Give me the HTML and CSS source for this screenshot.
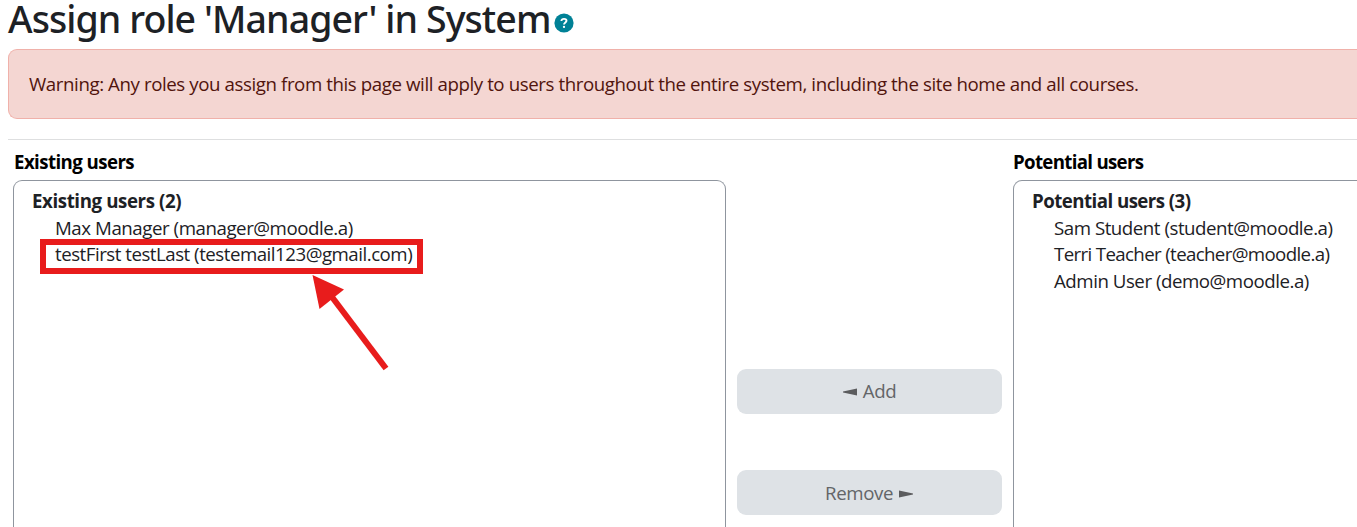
FILE: index.html
```html
<!DOCTYPE html>
<html lang="en">
<head>
<meta charset="utf-8">
<title>Assign role 'Manager' in System</title>
<link rel="stylesheet" href="styles.css">
</head>
<body>
<header class="page-head">
  <h1 class="title">Assign role 'Manager' in System</h1>
  <svg class="help" viewBox="0 0 20 20" role="img" aria-label="Help"><circle cx="10" cy="10" r="9.6" fill="#008196"/><path d="M7.4 8C7.4 6.500 8.400 5.900 10 5.900C11.600 5.900 12.500 6.600 12.500 7.800C12.500 9.500 10 9.400 10 11.600" fill="none" stroke="#fff" stroke-width="1.900"/><circle cx="10" cy="13.900" r="1.150" fill="#fff"/></svg>
</header>
<div class="alert">Warning: Any roles you assign from this page will apply to users throughout the entire system, including the site home and all courses.</div>
<hr class="rule">
<main class="assign">
  <section class="col">
    <h2 class="label">Existing users</h2>
    <div class="list">
      <div class="group">Existing users (2)</div>
      <div class="option">Max Manager (manager@moodle.a)</div>
      <div class="option marked">testFirst testLast (testemail123@gmail.com)</div>
    </div>
  </section>
  <div class="actions">
    <button class="btn"><svg class="tri" viewBox="0 0 15 8"><path d="M0 3.500L14 .5V7.500L0 4.500Z"/></svg>Add</button>
    <button class="btn remove">Remove<svg class="tri" viewBox="0 0 15 8"><path d="M15 3.500L1 .5V7.500L15 4.500Z"/></svg></button>
  </div>
  <section class="col potential">
    <h2 class="label">Potential users</h2>
    <div class="list">
      <div class="group">Potential users (3)</div>
      <div class="option">Sam Student (student@moodle.a)</div>
      <div class="option teacher">Terri Teacher (teacher@moodle.a)</div>
      <div class="option">Admin User (demo@moodle.a)</div>
    </div>
  </section>
</main>
<svg class="arrow" viewBox="0 0 80 100"><path d="M76 93.500L22 22" stroke="#e81c1c" stroke-width="6"/><path d="M2.500 0L34 14.500L9.500 34Z" fill="#e81c1c"/></svg>
</body>
</html>
```
FILE: styles.css
```css
*, *::before { box-sizing: border-box; }
body { margin: 0; width: 1357px; height: 527px; overflow: hidden; background: #fff; color: #1d2125; font: 18.7px/26.5px "Open Sans", sans-serif; letter-spacing: -0.415px; white-space: nowrap; }
.page-head { display: flex; height: 49px; padding-left: 8px; }
.title { margin: 0; font-family: "Noto Sans", sans-serif; font-size: 37.5px; line-height: 38px; font-weight: 500; letter-spacing: -0.92px; }
.help { width: 20px; height: 20px; margin: 13px 0 0 3.500px; }
.alert { height: 70px; margin-left: 8px; padding: 21px 20px; border: 1px solid #f0b1aa; border-right: 0; border-radius: 9px 0 0 9px; background: #f4d6d2; color: #51140d; }
.rule { margin: 20px 0 0 8px; border: 0; border-top: 1px solid #dedfe0; }
.assign { display: grid; grid-template-columns: 713px 265px 344px; column-gap: 11px; padding-left: 13px; height: 387px; }
.col { display: flex; flex-direction: column; }
.label { margin: 0; height: 40px; flex: none; padding: 9px 0 0 1px; font-size: 18.7px; line-height: 26px; font-weight: 700; color: #000; letter-spacing: -0.58px; }
.list { flex: 1; border: 1px solid #8f959e; border-bottom: 0; border-radius: 9px 9px 0 0; padding: 7px 18px; }
.group { font-weight: 700; letter-spacing: -0.4px; }
.option { padding-left: 23px; line-height: 26.5px; }
.group + .option { line-height: 25px; padding-bottom: 1.500px; letter-spacing: -0.45px; }
.potential .list { border-right: 0; border-radius: 9px 0 0 0; }
.potential .label { padding-left: 0; letter-spacing: -0.7px; }
.potential .group { letter-spacing: -0.55px; }
.potential .option { padding-left: 22px; letter-spacing: -0.47px; }
.potential .option:last-child { line-height: 26px; }
.potential .teacher { letter-spacing: -0.64px; }
.marked { position: relative; letter-spacing: -0.49px; }
.marked::before { content: ""; position: absolute; left: 8px; top: -2px; width: 383px; height: 35px; border: 6px solid #e81c1c; }
.actions { display: flex; flex-direction: column; gap: 56px; padding-top: 229px; }
.btn { display: flex; align-items: center; justify-content: center; gap: 5px; height: 45px; flex: none; padding: 0; border: 0; border-radius: 9px; background: #dee2e6; color: #636568; font: inherit; letter-spacing: -0.4px; }
.remove { padding: 2px 1px 0 0; }
.tri { width: 15px; height: 8px; fill: #5b5c5e; }
.arrow { position: absolute; left: 310px; top: 275px; width: 80px; height: 100px; }
```
